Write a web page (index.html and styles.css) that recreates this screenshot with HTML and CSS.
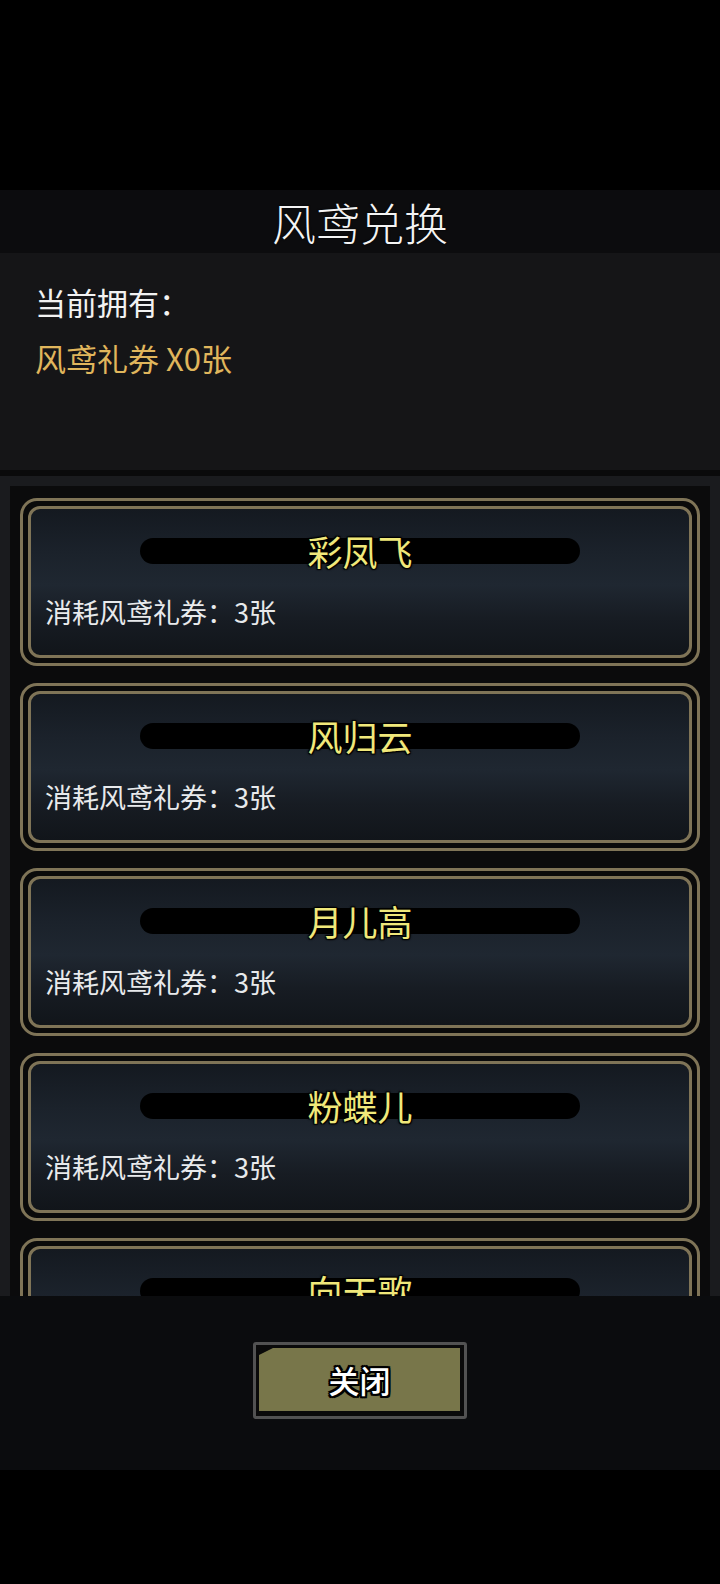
FILE: index.html
```html
<!DOCTYPE html>
<html lang="zh-CN">
<head>
<meta charset="utf-8">
<title>风鸢兑换</title>
<link rel="stylesheet" href="styles.css">
</head>
<body>
<div class="screen">
  <div class="top-space"></div>
  <div class="title-bar"><h1 class="title">风鸢兑换</h1></div>
  <div class="info-panel">
    <div class="info-label">当前拥有：</div>
    <div class="info-value">风鸢礼券 X0张</div>
  </div>
  <div class="separator"></div>
  <div class="list-area">
    <div class="list-box">
      <div class="card"><div class="card-inner">
        <div class="name-bar"><span class="name">彩凤飞</span></div>
        <div class="cost">消耗风鸢礼券：3张</div>
      </div></div>
      <div class="card"><div class="card-inner">
        <div class="name-bar"><span class="name">风归云</span></div>
        <div class="cost">消耗风鸢礼券：3张</div>
      </div></div>
      <div class="card"><div class="card-inner">
        <div class="name-bar"><span class="name">月儿高</span></div>
        <div class="cost">消耗风鸢礼券：3张</div>
      </div></div>
      <div class="card"><div class="card-inner">
        <div class="name-bar"><span class="name">粉蝶儿</span></div>
        <div class="cost">消耗风鸢礼券：3张</div>
      </div></div>
      <div class="card"><div class="card-inner">
        <div class="name-bar"><span class="name">向天歌</span></div>
        <div class="cost">消耗风鸢礼券：3张</div>
      </div></div>
    </div>
  </div>
  <div class="footer">
    <button class="close-btn"><span class="close-fill"><span class="close-text">关闭</span></span></button>
  </div>
  <div class="bottom-space"></div>
</div>
</body>
</html>
```
FILE: styles.css
```css
* { box-sizing: border-box; }
html, body {
  margin: 0;
  padding: 0;
  background: #000;
}
body {
  font-family: "Noto Sans CJK SC", "Noto Sans", sans-serif;
  color: #fff;
}
.screen {
  width: 720px;
  height: 1584px;
  display: flex;
  flex-direction: column;
  overflow: hidden;
}
.top-space {
  height: 190px;
  background: #000;
  flex: none;
}
.title-bar {
  height: 63px;
  flex: none;
  background: #0c0c0e;
  display: flex;
  align-items: center;
  justify-content: center;
}
.title {
  margin: 0;
  font-family: "AR PL UKai CN", "KaiTi", "STKaiti", "Noto Sans CJK SC", serif;
  font-weight: 300;
  font-size: 44px;
  line-height: 50px;
  color: #f4f4f4;
  text-shadow: 0 0 2px #000;
}
.info-panel {
  height: 217px;
  flex: none;
  background: #151517;
  padding: 31px 35px 0;
}
.info-label {
  font-size: 31px;
  line-height: 36px;
  color: #f2f2f2;
}
.info-value {
  margin-top: 20px;
  font-size: 31px;
  line-height: 36px;
  color: #e0b65c;
}
.separator {
  height: 6px;
  flex: none;
  background: #0a0a0b;
}
.list-area {
  height: 820px;
  flex: none;
  background: #1a1b1e;
  padding: 10px 10px 0 10px;
  overflow: hidden;
}
.list-box {
  background: #0b0b0c;
  padding: 12px 10px 0 10px;
  display: flex;
  flex-direction: column;
  gap: 17px;
}
.card {
  height: 168px;
  flex: none;
  border: 3px solid #7f7457;
  border-radius: 17px;
  background: #0a0a0a;
  padding: 5px;
}
.card-inner {
  height: 100%;
  border: 3px solid #7f7457;
  border-radius: 12px;
  background: linear-gradient(180deg, #141920 0%, #1b222b 30%, #1f2731 52%, #171c23 75%, #11151a 100%);
  padding: 29px 14px 0;
}
.name-bar {
  width: 440px;
  height: 26px;
  margin: 0 auto;
  background: #000;
  border-radius: 13px;
  display: flex;
  align-items: center;
  justify-content: center;
}
.name {
  font-size: 35px;
  line-height: 26px;
  color: #f0e87a;
  text-shadow: 1px 1px 1px #000, -1px -1px 1px #000, 1px -1px 1px #000, -1px 1px 1px #000, 0 0 3px #000;
}
.cost {
  margin-top: 33px;
  font-size: 27px;
  line-height: 30px;
  color: #e8eaec;
}
.footer {
  height: 174px;
  flex: none;
  background: #0b0c0e;
  display: flex;
  justify-content: center;
  align-items: flex-start;
  padding-top: 46px;
}
.close-btn {
  width: 214px;
  height: 77px;
  border: 3px solid #525252;
  border-radius: 3px;
  background: #0a0a0a;
  padding: 3px 4px 5px 3px;
  margin: 0;
  font-family: inherit;
  display: flex;
}
.close-fill {
  position: relative;
  flex: 1;
  background: #78764a;
  display: flex;
  align-items: center;
  justify-content: center;
}
.close-fill::before {
  content: "";
  position: absolute;
  left: 0;
  top: 0;
  width: 14px;
  height: 7px;
  background: #0a0a0a;
  clip-path: polygon(0 0, 100% 0, 0 100%);
}
.close-text {
  font-size: 31px;
  line-height: 36px;
  font-weight: 500;
  color: #fff;
  text-shadow: 2px 0 0 #000, -2px 0 0 #000, 0 2px 0 #000, 0 -2px 0 #000, 2px 2px 0 #000, -2px -2px 0 #000, 2px -2px 0 #000, -2px 2px 0 #000, 0 0 3px #000;
}
.bottom-space {
  flex: 1;
  background: #000;
}
```
